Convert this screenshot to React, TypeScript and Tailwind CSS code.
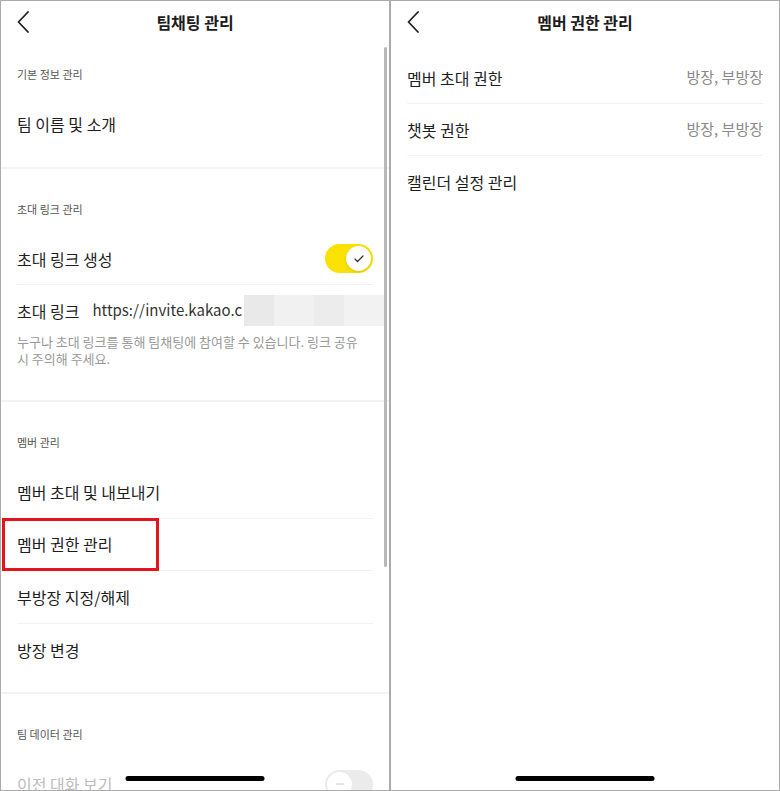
import { Check, Minus } from 'lucide-react'

const BackIcon = () => (
  <svg width="12" height="22" viewBox="0 0 12 22" fill="none">
    <polyline points="11,1 1.5,11 11,21" stroke="#222" strokeWidth="1.8" strokeLinecap="round" strokeLinejoin="round" />
  </svg>
)

function Header({ title }: { title: string }) {
  return (
    <div className="h-[42px] grid grid-cols-[44px_1fr_44px] items-center">
      <div className="pl-[16px] flex items-center"><BackIcon /></div>
      <div className="text-center text-[16px] font-semibold text-[#1c1c1c]">{title}</div>
      <div />
    </div>
  )
}

function SectionLabel({ children, pt }: { children: string; pt: string }) {
  return <div className={`px-4 ${pt} pb-4 text-[11px] leading-4 text-[#555]`}>{children}</div>
}

function Row({
  children,
  divider = true,
  right,
  h = 'h-[52px]',
}: {
  children: React.ReactNode
  divider?: boolean
  right?: React.ReactNode
  h?: string
}) {
  return (
    <div className={`mx-4 ${h} flex items-center justify-between ${divider ? 'border-b border-[#f1f1f1]' : ''}`}>
      <span className="text-[16px] text-[#1e1e1e]">{children}</span>
      {right}
    </div>
  )
}

const Separator = () => <div className="h-[2px] bg-[#f3f3f3]" />

const HomeBar = () => (
  <div className="absolute bottom-[9px] left-1/2 -translate-x-1/2 w-[139px] h-[5px] rounded-full bg-black" />
)

export default function App() {
  return (
    <div className="w-[780px] h-[791px] flex border border-[#ababab] bg-white overflow-hidden font-['Noto_Sans_CJK_KR','Noto_Sans',sans-serif]">
      {/* left: 팀채팅 관리 */}
      <div className="relative w-[390px] shrink-0 h-full border-r-2 border-[#ababab] overflow-hidden">
        <Header title="팀채팅 관리" />

        <SectionLabel pt="pt-[23px]">기본 정보 관리</SectionLabel>
        <Row divider={false}>팀 이름 및 소개</Row>
        <div className="h-[17px]" />
        <Separator />

        <SectionLabel pt="pt-[32px]">초대 링크 관리</SectionLabel>
        <Row
          right={
            <div className="w-[48px] h-[29px] rounded-full bg-[#fae100] flex items-center justify-end pr-[2px]">
              <div className="w-[25px] h-[25px] rounded-full bg-white shadow-sm flex items-center justify-center">
                <Check size={12} strokeWidth={2.5} className="text-[#333]" />
              </div>
            </div>
          }
        >
          초대 링크 생성
        </Row>
        <div className="h-[51px] flex items-center pl-4">
          <span className="text-[16px] text-[#1e1e1e]">초대 링크</span>
          <span className="ml-[13px] text-[15px] text-[#333] whitespace-nowrap">https://invite.kakao.c</span>
          <div className="ml-[2px] flex-1 h-[31px] flex bg-[#eeeeee] mr-[5px]">
            <div className="w-[30px] bg-[#e9e9e9]" />
            <div className="w-[40px] bg-[#f1f1f1]" />
            <div className="w-[30px] bg-[#ececec]" />
            <div className="flex-1 bg-[#f2f2f2]" />
          </div>
        </div>
        <p className="-mt-[3px] px-4 pr-[20px] text-[13px] leading-[17px] text-[#999]">
          누구나 초대 링크를 통해 팀채팅에 참여할 수 있습니다. 링크 공유 시 주의해 주세요.
        </p>
        <div className="h-[33px]" />
        <Separator />

        <SectionLabel pt="pt-[32px]">멤버 관리</SectionLabel>
        <Row h="h-[52.5px]">멤버 초대 및 내보내기</Row>
        <Row h="h-[52.5px]">멤버 권한 관리</Row>
        <Row h="h-[52.5px]">부방장 지정/해제</Row>
        <Row h="h-[52.5px]" divider={false}>방장 변경</Row>
        <div className="h-[16px]" />
        <Separator />

        <SectionLabel pt="pt-[32px]">팀 데이터 관리</SectionLabel>
        <div className="mx-4 h-[52px] flex items-center justify-between">
          <span className="text-[16px] text-[#bdbdbd]">이전 대화 보기</span>
          <div className="w-[48px] h-[29px] rounded-full bg-[#ebebeb] flex items-center pl-[2px]">
            <div className="w-[25px] h-[25px] rounded-full bg-white flex items-center justify-center">
              <Minus size={12} strokeWidth={2} className="text-[#c8c8c8]" />
            </div>
          </div>
        </div>

        {/* scrollbar */}
        <div className="absolute left-[383px] top-[46px] w-[3px] h-[520px] rounded-full bg-[#b8b8b8]" />
        {/* highlight box */}
        <div className="absolute left-[1px] top-[517px] w-[157px] h-[53px] border-[3px] border-[#e3141b]" />
        <HomeBar />
      </div>

      {/* right: 멤버 권한 관리 */}
      <div className="relative flex-1 h-full">
        <Header title="멤버 권한 관리" />
        <div className="h-[9px]" />
        <Row right={<span className="text-[15px] text-[#8a8a8a]">방장, 부방장</span>}>멤버 초대 권한</Row>
        <Row right={<span className="text-[15px] text-[#8a8a8a]">방장, 부방장</span>}>챗봇 권한</Row>
        <Row divider={false}>캘린더 설정 관리</Row>
        <HomeBar />
      </div>
    </div>
  )
}
